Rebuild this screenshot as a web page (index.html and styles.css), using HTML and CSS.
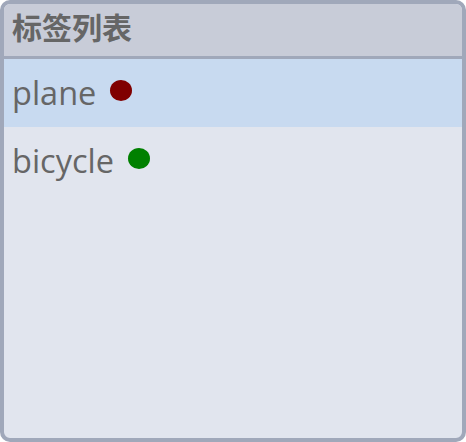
FILE: index.html
```html
<!DOCTYPE html>
<html>
<head>
<meta charset="utf-8">
<link rel="stylesheet" href="styles.css">
</head>
<body>
<div class="panel">
  <div class="header">标签列表</div>
  <div class="list">
    <div class="item selected"><span class="label">plane</span><span class="dot red"></span></div>
    <div class="item"><span class="label">bicycle</span><span class="dot green"></span></div>
  </div>
</div>
</body>
</html>
```
FILE: styles.css
```css
html, body {
  margin: 0;
  padding: 0;
}
body {
  width: 466px;
  height: 442px;
  font-family: "Open Sans", "Noto Sans CJK SC", sans-serif;
  color: #666666;
}
.panel {
  box-sizing: border-box;
  width: 466px;
  height: 442px;
  border: 4px solid #a0a8ba;
  border-radius: 10px;
  background: #e1e5ee;
  overflow: hidden;
  display: flex;
  flex-direction: column;
}
.header {
  height: 55px;
  box-sizing: border-box;
  border-bottom: 3px solid #a0a8ba;
  background: #c8ccd8;
  font-family: "Noto Sans CJK SC", sans-serif;
  font-weight: 700;
  font-size: 30px;
  line-height: 44px;
  padding-left: 8px;
}
.list {
  display: flex;
  flex-direction: column;
}
.item {
  height: 68px;
  display: flex;
  align-items: center;
  gap: 14px;
  padding-left: 8px;
  font-size: 32.5px;
}
.item.selected {
  background: #c8daf0;
}
.label {
  line-height: 1;
}
.dot {
  width: 22px;
  height: 21px;
  border-radius: 50%;
  margin-top: -5px;
}
.red { background: #800000; }
.green { background: #008000; }
```
